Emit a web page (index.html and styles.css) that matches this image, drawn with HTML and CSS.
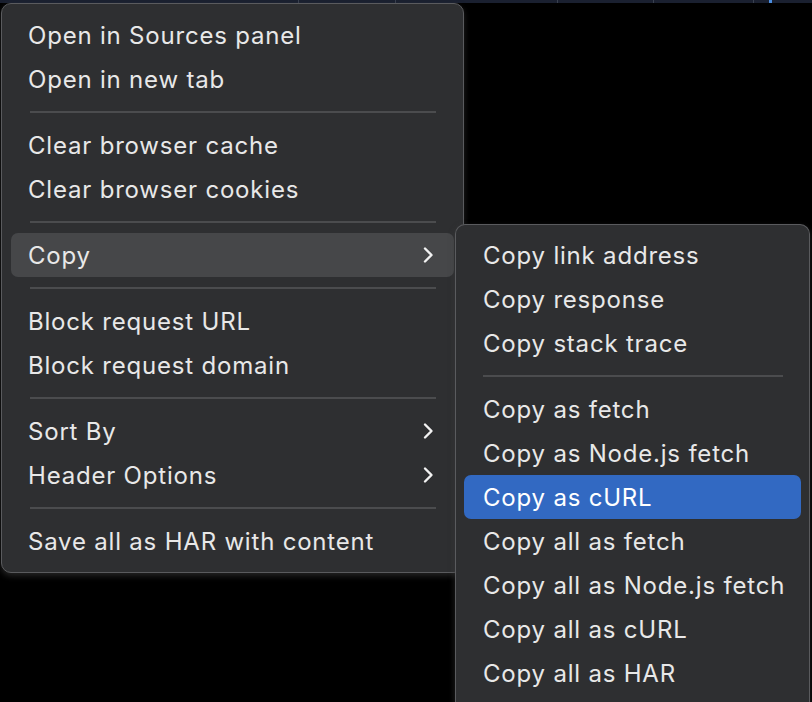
FILE: index.html
```html
<!DOCTYPE html>
<html>
<head>
<meta charset="utf-8">
<link rel="stylesheet" href="styles.css">
</head>
<body>
<div class="topstrip">
  <span class="tick t1"></span><span class="tick t2"></span><span class="tick t3"></span><span class="tick t4"></span><span class="tick t5"></span><span class="dot"></span>
</div>

<div class="menu main">
  <div class="item">Open in Sources panel</div>
  <div class="item">Open in new tab</div>
  <div class="sep"></div>
  <div class="item">Clear browser cache</div>
  <div class="item">Clear browser cookies</div>
  <div class="sep"></div>
  <div class="item sub active">Copy
    <svg class="chev" viewBox="0 0 12 18" width="12" height="18"><path d="M3 2.5 L9.5 9 L3 15.5" /></svg>
  </div>
  <div class="sep"></div>
  <div class="item">Block request URL</div>
  <div class="item">Block request domain</div>
  <div class="sep"></div>
  <div class="item sub">Sort By
    <svg class="chev" viewBox="0 0 12 18" width="12" height="18"><path d="M3 2.5 L9.5 9 L3 15.5" /></svg>
  </div>
  <div class="item sub">Header Options
    <svg class="chev" viewBox="0 0 12 18" width="12" height="18"><path d="M3 2.5 L9.5 9 L3 15.5" /></svg>
  </div>
  <div class="sep"></div>
  <div class="item">Save all as HAR with content</div>
</div>

<div class="menu submenu">
  <div class="item">Copy link address</div>
  <div class="item">Copy response</div>
  <div class="item">Copy stack trace</div>
  <div class="sep"></div>
  <div class="item">Copy as fetch</div>
  <div class="item">Copy as Node.js fetch</div>
  <div class="item selected">Copy as cURL</div>
  <div class="item">Copy all as fetch</div>
  <div class="item">Copy all as Node.js fetch</div>
  <div class="item">Copy all as cURL</div>
  <div class="item">Copy all as HAR</div>
</div>
</body>
</html>
```

FILE: styles.css
```css
html, body {
  margin: 0;
  padding: 0;
  background: #000;
  width: 812px;
  height: 702px;
  overflow: hidden;
  font-family: Inter, "Noto Sans", "Liberation Sans", sans-serif;
}

.topstrip {
  position: absolute;
  left: 0;
  top: 0;
  width: 812px;
  height: 3px;
  background: #1a2030;
}
.tick {
  position: absolute;
  top: 0;
  width: 1px;
  height: 3px;
  background: #3a4150;
}
.t1 { left: 298px; }
.t2 { left: 395px; }
.t3 { left: 557px; }
.t4 { left: 653px; }
.t5 { left: 753px; }
.dot {
  position: absolute;
  top: 0;
  left: 769px;
  width: 3px;
  height: 3px;
  background: #4a8de0;
}

.menu {
  position: absolute;
  box-sizing: border-box;
  background: #2e2f31;
  border: 1px solid #5a5b5e;
  border-radius: 10px;
  padding: 9px 9px;
  display: flex;
  flex-direction: column;
  box-shadow: 0 3px 6px rgba(60, 60, 60, 0.6);
}
.main {
  left: 1px;
  top: 3px;
  width: 463px;
}
.main .item {
  padding-left: 17px;
}
.submenu {
  left: 455px;
  top: 224px;
  width: 355px;
  height: 478px;
  padding: 8px 8px 0 8px;
  border-bottom: none;
  border-radius: 10px 10px 0 0;
  overflow: hidden;
}

.item {
  height: 44px;
  flex: none;
  display: flex;
  align-items: center;
  justify-content: space-between;
  padding: 0 20px 0 19px;
  font-size: 24px;
  color: #e8e8e8;
  border-radius: 7px;
  letter-spacing: 0.8px;
  white-space: nowrap;
}
.item.active {
  background: #464749;
}
.item.selected {
  background: #3269c2;
  color: #fff;
}
.chev {
  fill: none;
  stroke: #f2f2f2;
  stroke-width: 2.4;
  stroke-linecap: round;
  stroke-linejoin: round;
}

.sep {
  height: 22px;
  flex: none;
  display: flex;
  align-items: center;
  padding: 0 18px 0 19px;
}
.sep::before {
  content: "";
  flex: 1;
  height: 2px;
  background: #4b4c4e;
}
```
